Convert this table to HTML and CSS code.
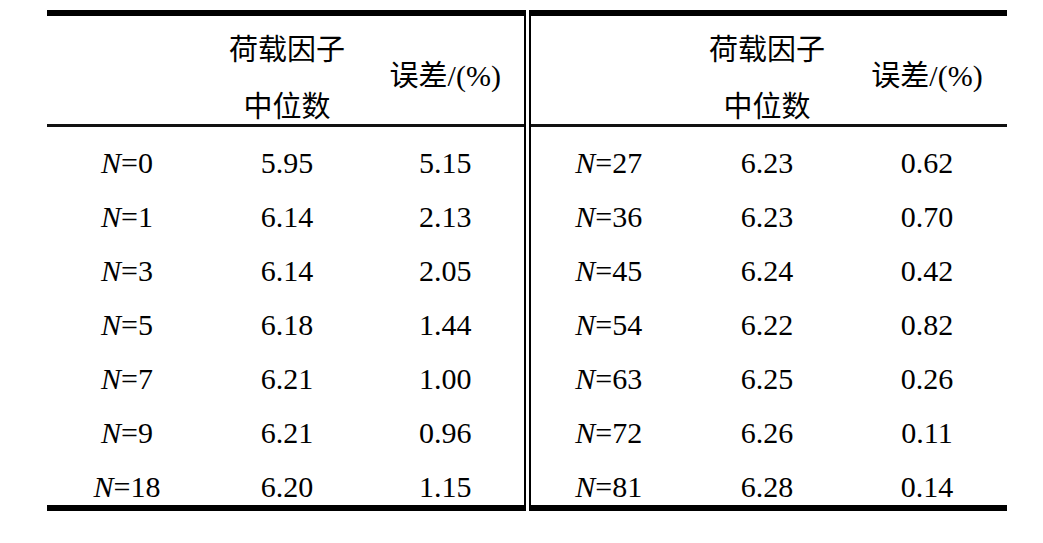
FILE: index.html
```html
<!DOCTYPE html>
<html lang="en">
<head>
    <meta charset="UTF-8">
    <title>荷载因子中位数</title>
    <link rel="stylesheet" href="styles.css">
</head>
<body>
    <table class="data">
        <colgroup>
            <col class="c">
            <col class="c">
            <col class="c">
            <col class="c">
            <col class="c">
            <col class="c">
        </colgroup>
        <thead>
            <tr>
                <th></th>
                <th><div class="two">荷载因子<br>中位数</div></th>
                <th class="err"><span class="zh">误差</span>/(%)</th>
                <th class="split"></th>
                <th><div class="two">荷载因子<br>中位数</div></th>
                <th class="err"><span class="zh">误差</span>/(%)</th>
            </tr>
        </thead>
        <tbody>
            <tr><td><i>N</i>=0</td><td>5.95</td><td>5.15</td><td class="split"><i>N</i>=27</td><td>6.23</td><td>0.62</td></tr>
            <tr><td><i>N</i>=1</td><td>6.14</td><td>2.13</td><td class="split"><i>N</i>=36</td><td>6.23</td><td>0.70</td></tr>
            <tr><td><i>N</i>=3</td><td>6.14</td><td>2.05</td><td class="split"><i>N</i>=45</td><td>6.24</td><td>0.42</td></tr>
            <tr><td><i>N</i>=5</td><td>6.18</td><td>1.44</td><td class="split"><i>N</i>=54</td><td>6.22</td><td>0.82</td></tr>
            <tr><td><i>N</i>=7</td><td>6.21</td><td>1.00</td><td class="split"><i>N</i>=63</td><td>6.25</td><td>0.26</td></tr>
            <tr><td><i>N</i>=9</td><td>6.21</td><td>0.96</td><td class="split"><i>N</i>=72</td><td>6.26</td><td>0.11</td></tr>
            <tr><td><i>N</i>=18</td><td>6.20</td><td>1.15</td><td class="split"><i>N</i>=81</td><td>6.28</td><td>0.14</td></tr>
        </tbody>
    </table>
</body>
</html>
```

FILE: styles.css
```css
body {
    margin: 0;
    background: #fff;
    color: #000;
}
.data {
    margin: 10px 0 0 47px;
    width: 960px;
    table-layout: fixed;
    border-collapse: collapse;
    border-top: 6px solid #000;
    border-bottom: 6px solid #000;
    font-family: "Times New Roman", "Liberation Serif", "DejaVu Serif", serif;
    font-size: 30px;
}
.c {
    width: 160px;
}
th {
    font-weight: normal;
    text-align: center;
    vertical-align: middle;
    padding: 0;
    border-bottom: 3px solid #111;
}
th.err {
    padding-top: 12px;
    line-height: 34px;
}
.two {
    font-family: "Noto Sans CJK SC", sans-serif;
    font-size: 29px;
    line-height: 57px;
    margin: 3px 0 -9px;
}
.zh {
    font-family: "Noto Sans CJK SC", sans-serif;
    font-size: 29px;
    line-height: 20px;
}
td {
    text-align: center;
    line-height: 33px;
    padding: 19px 0 2px;
}
.split {
    border-left: 7px double #000;
}
i {
    font-style: italic;
}
```
